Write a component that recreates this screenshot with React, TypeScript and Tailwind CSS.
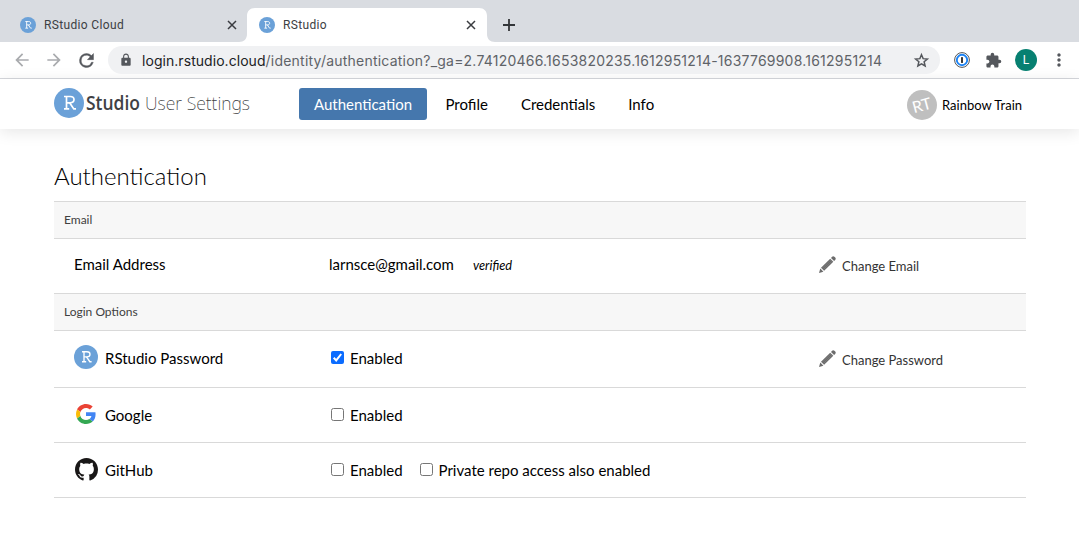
import React from 'react';
import { MdArrowBack, MdArrowForward, MdExtension, MdLock, MdMoreVert } from 'react-icons/md';

function RBadge({ className }: { className: string }) {
  return (
    <svg viewBox="0 0 30 30" className={className} aria-hidden="true">
      <circle cx="15" cy="15" r="15" fill="#6ba1d8" />
      <g fill="none" stroke="#fff" strokeWidth="1.7">
        <path d="M10 8.5h6.2c2.4 0 3.8 1.2 3.8 3.1s-1.5 3.2-3.8 3.2h-3.6" />
        <path d="M12.5 8.5v12.2M10 20.9h5.2M15.6 14.8l4.2 6.1h2.2" />
      </g>
    </svg>
  );
}

function CloseIcon() {
  return (
    <svg viewBox="0 0 10 10" className="ml-0.5 size-[10px]" aria-hidden="true">
      <path d="M1 1l8 8M9 1l-8 8" stroke="#3a3c40" strokeWidth="1.5" fill="none" />
    </svg>
  );
}

function PlusIcon() {
  return (
    <svg viewBox="0 0 12 12" className="size-3" aria-hidden="true">
      <path d="M6 0v12M0 6h12" stroke="#333639" strokeWidth="1.8" fill="none" />
    </svg>
  );
}

function ReloadIcon() {
  return (
    <svg viewBox="0 0 24 24" className="ml-3 size-[21px]" aria-hidden="true">
      <path
        fill="#54575c"
        stroke="#54575c"
        strokeWidth="0.5"
        d="M17.65 6.35A7.96 7.96 0 0 0 12 4a8 8 0 1 0 7.73 10h-2.08A6 6 0 1 1 12 6c1.66 0 3.14.69 4.22 1.78L13 11h7V4l-2.35 2.35z"
      />
    </svg>
  );
}

function StarIcon() {
  return (
    <svg viewBox="0 0 24 24" className="size-[17px] shrink-0" aria-hidden="true">
      <path
        fill="none"
        stroke="#54575c"
        strokeWidth="2.1"
        d="M12 3.9l2.3 5.5 6 .5-4.6 3.9 1.4 5.9-5.1-3.1-5.1 3.1 1.4-5.9-4.6-3.9 6-.5z"
      />
    </svg>
  );
}

function GoogleIcon() {
  return (
    <svg viewBox="0 0 48 48" className="size-5" aria-hidden="true">
      <path fill="#EA4335" d="M24 9.5c3.54 0 6.71 1.22 9.21 3.6l6.85-6.85C35.9 2.38 30.47 0 24 0 14.62 0 6.51 5.38 2.56 13.22l7.98 6.19C12.43 13.72 17.74 9.5 24 9.5z" />
      <path fill="#4285F4" d="M46.98 24.55c0-1.57-.15-3.09-.38-4.55H24v9.02h12.94c-.58 2.96-2.26 5.48-4.78 7.18l7.73 6c4.51-4.18 7.09-10.36 7.09-17.65z" />
      <path fill="#FBBC05" d="M10.53 28.59c-.48-1.45-.76-2.99-.76-4.59s.27-3.14.76-4.59l-7.98-6.19C.92 16.46 0 20.12 0 24c0 3.88.92 7.54 2.56 10.78l7.97-6.19z" />
      <path fill="#34A853" d="M24 48c6.48 0 11.93-2.13 15.89-5.81l-7.73-6c-2.15 1.45-4.92 2.3-8.16 2.3-6.26 0-11.57-4.22-13.47-9.91l-7.98 6.19C6.51 42.62 14.62 48 24 48z" />
    </svg>
  );
}

function GitHubIcon() {
  return (
    <svg viewBox="0 0 16 16" className="h-[23px] w-[23px]" fill="#191717" aria-hidden="true">
      <path d="M8 0C3.58 0 0 3.58 0 8c0 3.54 2.29 6.53 5.47 7.59.4.07.55-.17.55-.38 0-.19-.01-.82-.01-1.49-2.01.37-2.53-.49-2.69-.94-.09-.23-.48-.94-.82-1.13-.28-.15-.68-.52-.01-.53.63-.01 1.08.58 1.23.82.72 1.21 1.87.87 2.33.66.07-.52.28-.87.51-1.07-1.78-.2-3.64-.89-3.64-3.95 0-.87.31-1.59.82-2.15-.08-.2-.36-1.02.08-2.12 0 0 .67-.21 2.2.82.64-.18 1.32-.27 2-.27s1.36.09 2 .27c1.53-1.04 2.2-.82 2.2-.82.44 1.1.16 1.92.08 2.12.51.56.82 1.27.82 2.15 0 3.07-1.87 3.75-3.65 3.95.29.25.54.73.54 1.48 0 1.07-.01 1.93-.01 2.2 0 .21.15.46.55.38A8.01 8.01 0 0 0 16 8c0-4.42-3.58-8-8-8Z" />
    </svg>
  );
}

function PencilIcon() {
  return (
    <svg viewBox="0 0 17 17" className="size-[17px]" fill="#6b6b6b" aria-hidden="true">
      <path d="M0 17l1.3-4.4 3.1 3.1z" />
      <path d="M2 11.7L11.2 2.7l3.1 3.1-9.2 9z" />
      <path d="M12 1.9l1.1-1.1c.7-.7 1.6-.7 2.3 0l.8.8c.7.7.7 1.6 0 2.3L15.1 5z" />
      <path d="M3 12.6l9-8.8M4.2 13.8l9-8.8" stroke="#8b8b8b" strokeWidth=".5" />
    </svg>
  );
}

function Check({ checked = false, label }: { checked?: boolean; label: string }) {
  return (
    <label className="flex items-center">
      <span
        className={
          checked
            ? 'mb-0.5 flex size-[13px] items-center justify-center rounded-[2px] bg-[#0b6cff]'
            : 'mb-0.5 size-[13px] rounded-[2.5px] border border-[#767676] bg-white'
        }
      >
        {checked && (
          <svg viewBox="0 0 13 13" className="size-[13px]" aria-hidden="true">
            <path d="M2.7 6.8l2.5 2.6 5-6.4" fill="none" stroke="#fff" strokeWidth="2" />
          </svg>
        )}
      </span>
      <span className="ml-1.5">{label}</span>
    </label>
  );
}

function SectionHead({ children }: { children: React.ReactNode }) {
  return (
    <div className="flex h-[37px] items-center border-b border-[#d9d9d9] bg-[#f7f7f7] px-2.5 text-[12px] text-[#404040]">
      {children}
    </div>
  );
}

function Row({
  className,
  name,
  children,
  action,
}: {
  className: string;
  name: React.ReactNode;
  children: React.ReactNode;
  action?: React.ReactNode;
}) {
  return (
    <div className={`flex items-center border-b border-[#d9d9d9] pl-5 text-[15px] ${className}`}>
      <div className="flex w-[255px] items-center">{name}</div>
      <div className="flex w-[490px] items-center">{children}</div>
      {action}
    </div>
  );
}

function EditLink({ className, label }: { className: string; label: string }) {
  return (
    <a className={`flex items-center text-[13px] text-[#333] ${className}`}>
      <span className="-mt-px"><PencilIcon /></span>
      <span className="ml-1.5 pt-[3px]">{label}</span>
    </a>
  );
}

export default function App() {
  return (
    <div className="h-[544px] w-[1079px] overflow-hidden bg-white font-['Lato',sans-serif] text-black">
      <div className="flex h-[42px] items-end bg-[#d9dce1] font-['Roboto',sans-serif] text-[12px] text-[#3c4043]">
        <div className="flex h-[34px] w-[247px] items-center pl-5">
          <RBadge className="size-4" />
          <span className="ml-2 w-[181px] tracking-[0.35px]">RStudio Cloud</span>
          <CloseIcon />
        </div>
        <div className="relative z-10 h-[34px] w-[240px]">
          <svg className="absolute -left-2 bottom-0" width="256" height="34" viewBox="0 0 256 34" fill="#fff" aria-hidden="true">
            <path d="M0 34c5 0 8-3 8-8V8c0-5 3-8 8-8h224c5 0 8 3 8 8v18c0 5 3 8 8 8z" />
          </svg>
          <div className="relative flex h-full items-center pl-3">
            <RBadge className="size-4" />
            <span className="ml-2 w-[181px] tracking-[0.35px]">RStudio</span>
            <CloseIcon />
          </div>
        </div>
        <div className="flex h-[34px] items-center pl-4">
          <PlusIcon />
        </div>
      </div>

      <div className="flex h-[37px] items-center border-b border-[#d5d7dc] text-[#54575c]">
        <MdArrowBack className="ml-3 size-5 text-[#a9abae]" />
        <MdArrowForward className="ml-3 size-5 text-[#a9abae]" />
        <ReloadIcon />
        <div className="ml-[11px] flex h-7 w-[832px] items-center rounded-full bg-[#f0f1f3] pl-[11px] font-['Inter',sans-serif] text-[14px]">
          <MdLock className="size-[14px]" />
          <span className="ml-[9px] w-[771px] whitespace-nowrap tracking-[0.22px] text-[#5f6368]">
            <span className="tracking-[0.05px] text-[#202124]">login.rstudio.cloud</span>
            /identity/authentication?_ga=2.74120466.1653820235.1612951214-1637769908.1612951214
          </span>
          <StarIcon />
        </div>
        <svg viewBox="0 0 16 16" className="ml-[14px] size-4" aria-hidden="true">
          <circle cx="8" cy="8" r="7.4" fill="#fff" stroke="#555" strokeWidth="1" />
          <circle cx="8" cy="8" r="5.2" fill="#fff" stroke="#1b83f5" strokeWidth="1.9" />
          <rect x="7.1" y="5" width="1.8" height="6" rx=".4" fill="#222" />
        </svg>
        <MdExtension className="ml-[15px] size-[17px]" />
        <span className="ml-[13px] flex size-[22px] items-center justify-center rounded-full bg-[#078071] font-['Roboto',sans-serif] text-[12px] text-white">
          L
        </span>
        <MdMoreVert className="ml-3 size-5" />
      </div>

      <header className="flex h-[50px] bg-white pl-[54px] shadow-[0_3px_16px_rgba(0,0,0,0.1)]">
        <div className="flex w-[245px] pt-[9px]">
          <RBadge className="size-[30px]" />
          <svg width="190" height="34" viewBox="0 0 190 34" className="shrink-0 overflow-visible" role="img">
            <text x="2" y="22" fontSize="19" fontWeight="600" fill="#404144" fontFamily="Open Sans, sans-serif" textLength="54" lengthAdjust="spacingAndGlyphs">
              Studio
            </text>
            <text x="61" y="22" fontSize="19" fontWeight="200" fill="#3c3d40" fontFamily="Noto Sans, sans-serif" textLength="105" lengthAdjust="spacingAndGlyphs">
              User Settings
            </text>
          </svg>
        </div>
        <nav className="flex w-[608px] items-start pt-[9px] text-[15px] leading-8">
          <a className="h-8 w-32 rounded-[3px] bg-[#4577ad] text-center text-white">Authentication</a>
          <a className="ml-[18.5px]">Profile</a>
          <a className="ml-[33px]">Credentials</a>
          <a className="ml-[33px]">Info</a>
        </nav>
        <div className="flex items-center pt-0.5">
          <span className="flex size-[30px] items-center justify-center rounded-full bg-[#bfbfbf] text-[16px] text-white">
            <span className="-rotate-[15deg]">RT</span>
          </span>
          <span className="ml-[5px] pt-0.5 text-[13px]">Rainbow Train</span>
        </div>
      </header>

      <main className="ml-[54px] w-[972px] pt-[29px]">
        <h1 className="h-[43px] text-[24px] font-light leading-9">Authentication</h1>
        <div className="border-t border-[#d9d9d9]">
          <SectionHead>Email</SectionHead>
          <Row
            className="h-[55px] pb-[3px]"
            name="Email Address"
            action={<EditLink className="pt-px" label="Change Email" />}
          >
            <span>larnsce@gmail.com</span>
            <span className="ml-[19px] pt-[3px] text-[12.8px] italic">verified</span>
          </Row>
          <SectionHead>Login Options</SectionHead>
          <Row
            className="h-[57px] pb-0.5"
            action={<EditLink className="pt-0.5" label="Change Password" />}
            name={
              <>
                <RBadge className="mb-0.5 size-6" />
                <span className="ml-[7px]">RStudio Password</span>
              </>
            }
          >
            <div className="ml-0.5"><Check checked label="Enabled" /></div>
          </Row>
          <Row
            className="h-[55px]"
            name={
              <>
                <span className="mb-[3px] ml-0.5"><GoogleIcon /></span>
                <span className="ml-[9px]">Google</span>
              </>
            }
          >
            <div className="ml-0.5"><Check label="Enabled" /></div>
          </Row>
          <Row
            className="h-[55px]"
            name={
              <>
                <span className="mb-0.5 ml-px"><GitHubIcon /></span>
                <span className="ml-[7px]">GitHub</span>
              </>
            }
          >
            <div className="ml-0.5 flex gap-[17px]">
              <Check label="Enabled" />
              <Check label="Private repo access also enabled" />
            </div>
          </Row>
        </div>
      </main>
    </div>
  );
}
